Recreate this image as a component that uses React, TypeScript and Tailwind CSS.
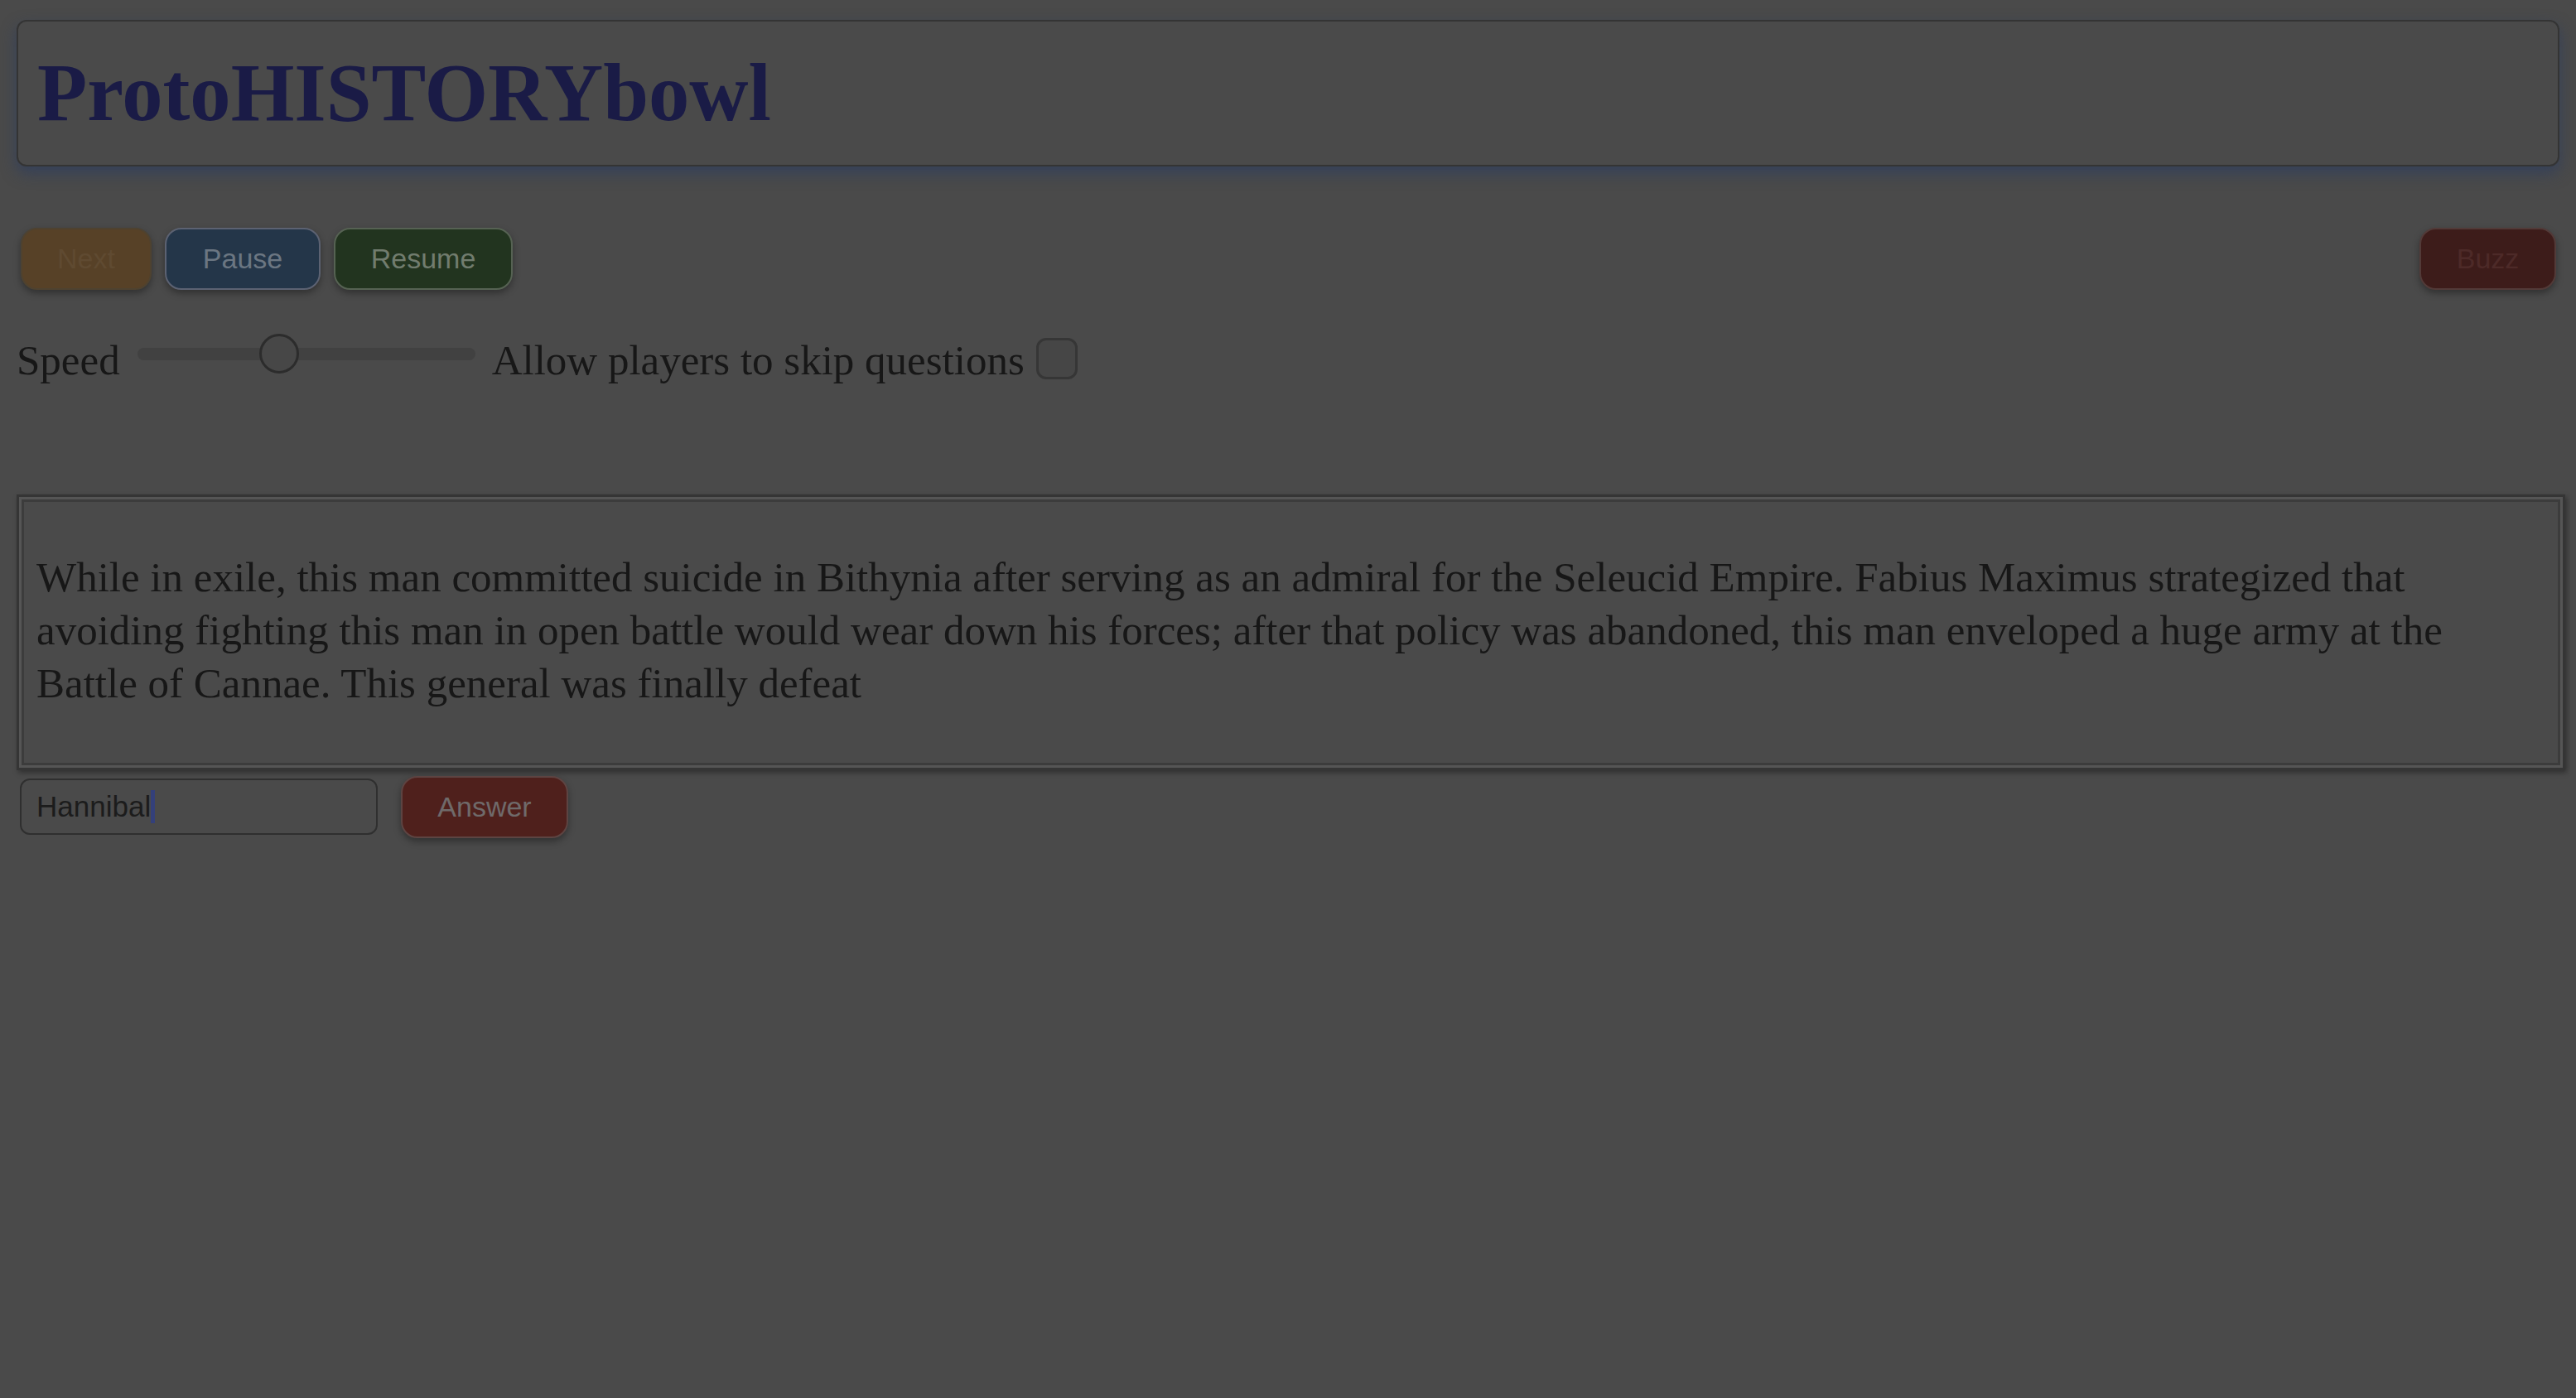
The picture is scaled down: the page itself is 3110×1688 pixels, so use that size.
const serif = { fontFamily: '"Liberation Serif", "Times New Roman", serif' }

const question =
  'While in exile, this man committed suicide in Bithynia after serving as an admiral for the Seleucid Empire. Fabius Maximus strategized that avoiding fighting this man in open battle would wear down his forces; after that policy was abandoned, this man enveloped a huge army at the Battle of Cannae. This general was finally defeat'

function Btn({ label, className }: { label: string; className: string }) {
  return (
    <button
      className={
        'h-[75px] rounded-[20px] border-2 text-[34px] font-["Liberation_Sans",Arial,sans-serif] shadow-[0_4px_8px_rgba(0,0,0,0.35)] ' +
        className
      }
    >
      {label}
    </button>
  )
}

export default function App() {
  const speed = 0.41

  return (
    <div className="min-h-screen bg-[#4a4a4a] px-[20px] pt-[24px] text-[#171717]" style={serif}>
      {/* Header */}
      <div className="flex h-[177px] items-center rounded-[12px] border-2 border-[#343434] bg-[#4a4a4a] pl-[23px] shadow-[0_8px_18px_rgba(45,62,95,0.75)]">
        <h1 className="text-[98.6px] font-bold leading-none text-[#1a1b46]">ProtoHISTORYbowl</h1>
      </div>

      {/* Controls */}
      <div className="mt-[74px] flex items-center justify-between pl-[5px] pr-[4px]">
        <div className="flex gap-[16px]">
          <Btn label="Next" className="w-[158px] border-[#4e4230] bg-[#574127] text-[#5f4a31]" />
          <Btn label="Pause" className="w-[188px] border-[#5c6272] bg-[#243649] text-[#6b7682]" />
          <Btn label="Resume" className="w-[216px] border-[#566253] bg-[#22341f] text-[#717c6e]" />
        </div>
        <Btn label="Buzz" className="w-[165px] border-[#523a38] bg-[#3d1c1a] text-[#4d2a28]" />
      </div>

      {/* Speed row */}
      <div className="mt-[47px] flex h-[60px] items-center text-[51px]">
        <span className="pt-[16px] leading-[57px]">Speed</span>
        <div className="relative ml-[21px] h-[15px] w-[408px] rounded-full bg-[#414141]">
          <div
            className="absolute top-1/2 h-[48px] w-[48px] -translate-y-1/2 rounded-full border-[3px] border-[#2c2c2c] bg-[#474747]"
            style={{ left: `${speed * 360}px` }}
          />
        </div>
        <span className="ml-[20px] pt-[16px] leading-[57px]">Allow players to skip questions</span>
        <div className="ml-[14px] mt-[12px] h-[50px] w-[50px] rounded-[12px] border-[3px] border-[#363636] bg-[#464646]" />
      </div>

      {/* Question */}
      <div className="-mr-[7px] mt-[140px] border-[3px] border-[#353535] bg-[#555555] p-[3px] shadow-[2px_3px_6px_rgba(0,0,0,0.35)]">
        <div className="border-[3px] border-[#3c3c3c] bg-[#4a4a4a] pb-[64px] pl-[15px] pr-[80px] pt-[59px]">
          <p className="text-[51px] leading-[64px]">{question}</p>
        </div>
      </div>

      {/* Answer */}
      <div className="mt-[6px] flex h-[76px] items-center pl-[4px]">
        <div className="flex h-[68px] w-[432px] items-center rounded-[12px] border-2 border-[#2f2f2f] bg-[#4a4a4a] px-[18px] text-[35px] text-[#1c1c1c] font-['Liberation_Sans',Arial,sans-serif]">
          <span>Hannibal</span>
          <span className="h-[40px] w-[5px] shrink-0 bg-[#34407a]" />
        </div>
        <Btn label="Answer" className="ml-[28px] w-[202px] border-[#5d4442] bg-[#4f201c] text-[#6f6a6a]" />
      </div>
    </div>
  )
}
